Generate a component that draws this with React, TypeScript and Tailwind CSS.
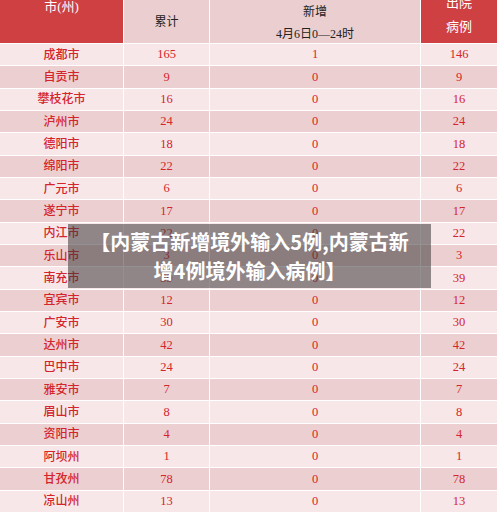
const rows: [string, number, number, number][] = [
  ["成都市", 165, 1, 146],
  ["自贡市", 9, 0, 9],
  ["攀枝花市", 16, 0, 16],
  ["泸州市", 24, 0, 24],
  ["德阳市", 18, 0, 18],
  ["绵阳市", 22, 0, 22],
  ["广元市", 6, 0, 6],
  ["遂宁市", 17, 0, 17],
  ["内江市", 22, 0, 22],
  ["乐山市", 3, 0, 3],
  ["南充市", 39, 0, 39],
  ["宜宾市", 12, 0, 12],
  ["广安市", 30, 0, 30],
  ["达州市", 42, 0, 42],
  ["巴中市", 24, 0, 24],
  ["雅安市", 7, 0, 7],
  ["眉山市", 8, 0, 8],
  ["资阳市", 4, 0, 4],
  ["阿坝州", 1, 0, 1],
  ["甘孜州", 78, 0, 78],
  ["凉山州", 13, 0, 13],
];

export default function App() {
  return (
    <div className="relative w-[500px] h-[512px] overflow-hidden bg-white">
      <div
        className="grid grid-cols-[123px_85px_210px_76px] grid-rows-[43px_repeat(21,1fr)] gap-px h-[512px] bg-white text-[12px] text-[#d4252c]"
        style={{ fontFamily: "'Liberation Serif', 'Noto Sans CJK SC', serif" }}
      >
        {/* header */}
        <div className="bg-[#cf4042] text-white flex justify-center overflow-hidden">
          <span className="-mt-[3px] text-[13px]">市(州)</span>
        </div>
        <div className="bg-[#ebcfd0] text-[#222] flex items-center justify-center pt-px">累计</div>
        <div className="bg-[#ebcfd0] text-[#222] flex flex-col items-center pt-[1px] leading-[22px]">
          <span>新增</span>
          <span>4月6日0—24时</span>
        </div>
        <div className="bg-[#cf4042] text-white flex flex-col items-center overflow-hidden leading-[24px] -mt-[9px] text-[13px]">
          <span>出院</span>
          <span>病例</span>
        </div>

        {rows.map(([city, total, added, cured], i) => {
          const bg = i % 2 === 0 ? "bg-[#f7e7e8]" : "bg-[#ecd0d1]";
          return [
            <div key={city + "a"} className={`${bg} flex items-center justify-center font-medium`}>{city}</div>,
            <div key={city + "b"} className={`${bg} flex items-center justify-center text-[12.5px]`}>{total}</div>,
            <div key={city + "c"} className={`${bg} flex items-center justify-center text-[12.5px]`}>{added}</div>,
            <div key={city + "d"} className={`${bg} flex items-center justify-center text-[12.5px]`}>{cured}</div>,
          ];
        })}
      </div>

      <div className="absolute left-[68px] top-[224px] w-[363px] h-[64px] bg-[rgba(60,55,56,0.55)] flex flex-col items-center justify-center">
        <p
          className="text-white font-bold text-[20px] leading-[29px] text-center whitespace-nowrap"
          style={{ fontFamily: "'Noto Sans CJK SC', 'Noto Sans', sans-serif" }}
        >
          【内蒙古新增境外输入5例,内蒙古新
          <br />
          增4例境外输入病例】
        </p>
      </div>
    </div>
  );
}
